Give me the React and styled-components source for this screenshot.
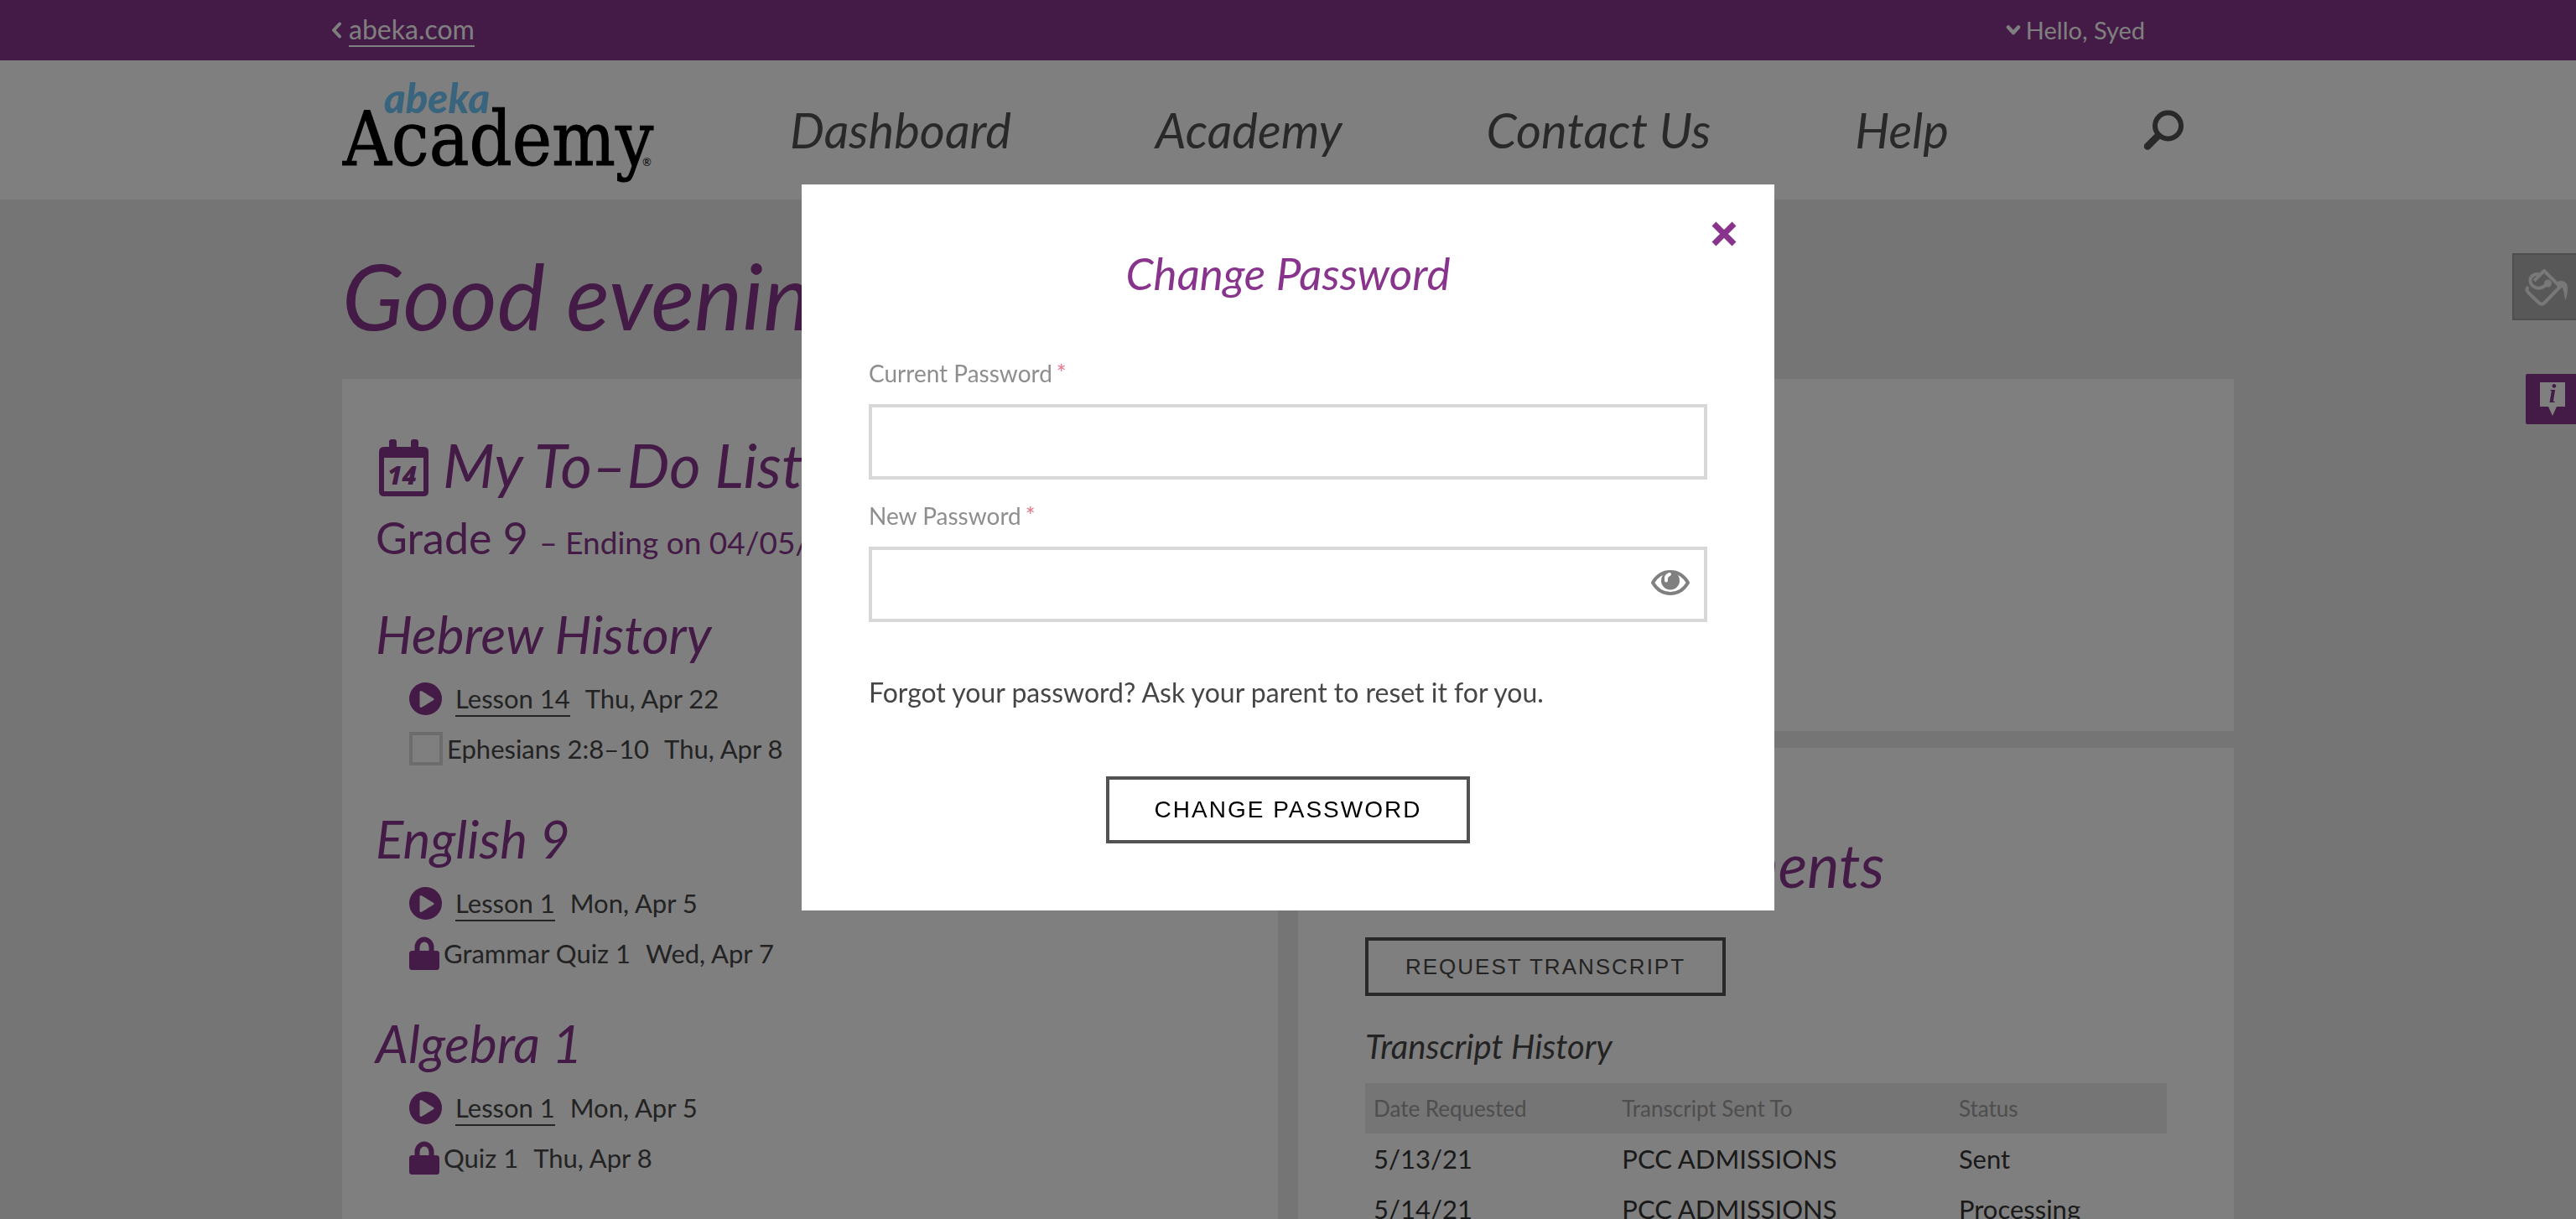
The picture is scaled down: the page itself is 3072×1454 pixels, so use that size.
import React from 'react';
import styled, { createGlobalStyle } from 'styled-components';

const purple = '#88348c';
const ink = '#464646';
const charcoal = '#525252';
const mist = '#eaeaea';
const sans = 'Lato, "Open Sans", sans-serif';
const grotesk = '"Liberation Sans", Arial, sans-serif';

const GlobalStyle = createGlobalStyle`
  *, *::before, *::after { box-sizing: border-box; }
  body { margin: 0; background: ${mist}; font-family: ${sans}; color: ${ink}; }
  h1, h2, h3, p, ul { margin: 0; padding: 0; font-weight: 400; }
  svg { display: block; flex: none; }
`;

const Page = styled.div`
  display: flex;
  flex-direction: column;
  height: 100vh;
  overflow: hidden;
  background: ${mist};
`;

/* ---------- top bar and header ---------- */

const TopBar = styled.div`
  flex: none;
  background: ${purple};
  color: #fff;
`;

const TopBarInner = styled.div`
  display: flex;
  align-items: center;
  justify-content: space-between;
  height: 72px;
  max-width: 2282px;
  margin: 0 auto;
  padding: 0 119px 0 0;
  font-size: 32px;
  line-height: 36px;
`;

const TopBarGroup = styled.div`
  display: flex;
  align-items: center;
  gap: ${(p) => p.$gap}px;
`;

const UserButton = styled.button`
  display: flex;
  align-items: center;
  gap: 6px;
  padding: 0;
  border: 0;
  background: none;
  color: inherit;
  font: 29px/36px ${sans};
`;

const TextLink = styled.a`
  padding-bottom: 1px;
  border-bottom: 2px solid currentColor;
  color: inherit;
  text-decoration: none;
`;

const Header = styled.header`
  flex: none;
  background: #fff;
`;

const HeaderInner = styled.div`
  display: flex;
  align-items: center;
  height: 166px;
  max-width: 2256px;
  margin: 0 auto;
`;

const LogoLink = styled.a`
  flex: none;
  width: 534px;
`;

const Nav = styled.nav`
  display: flex;
  flex: 1;
  justify-content: space-between;
`;

const NavLink = styled.a`
  color: ${charcoal};
  font-size: 58px;
  font-style: italic;
  line-height: 72px;
  text-decoration: none;
`;

const SearchButton = styled.button`
  flex: none;
  display: flex;
  justify-content: flex-end;
  width: 340px;
  padding: 0 60px 0 0;
  border: 0;
  background: none;
  color: ${charcoal};
`;

/* ---------- dashboard ---------- */

const Main = styled.main`
  width: 100%;
  max-width: 2256px;
  margin: 0 auto;
  padding-top: 54px;
`;

const Greeting = styled.h1`
  margin-bottom: 40px;
  color: ${purple};
  font-size: 108px;
  font-style: italic;
  line-height: 120px;
`;

const Columns = styled.div`
  display: grid;
  grid-template-columns: 1fr 1fr;
  gap: 24px;
`;

const RightColumn = styled.div`
  display: grid;
  grid-template-rows: 420px auto;
  gap: 20px;
`;

const Panel = styled.section`
  padding: ${(p) => p.$pad || '60px 40px'};
  background: #fff;
`;

const PanelTitle = styled.h2`
  display: flex;
  align-items: center;
  gap: 16px;
  color: ${purple};
  font-size: 72px;
  font-style: italic;
  line-height: 84px;
`;

const GradeLine = styled.p`
  margin: 13px 0 40px;
  color: ${purple};
  font-size: 52px;
  line-height: 64px;
  white-space: nowrap;
`;

const GradeNote = styled.span`
  font-size: 37px;
`;

const Subject = styled.section`
  margin-bottom: 40px;
`;

const SubjectTitle = styled.h3`
  margin-bottom: 10px;
  color: ${purple};
  font-size: 62px;
  font-style: italic;
  line-height: 74px;
`;

const TaskList = styled.ul`
  padding-left: 40px;
  list-style: none;
`;

const Task = styled.li`
  display: flex;
  align-items: center;
  gap: ${(p) => (p.$kind === 'lesson' ? 16 : 5)}px;
  height: 60px;
  font-size: 31px;
`;

const TaskDate = styled.span`
  margin-left: 18px;
`;

const TaskCheck = styled.input`
  appearance: none;
  width: 40px;
  height: 40px;
  margin: 0;
  border: 4px solid #d8d8d8;
  background: #fff;
`;

/* ---------- buttons and table ---------- */

const OutlineButton = styled.button`
  display: block;
  height: ${(p) => (p.$large ? 80 : 70)}px;
  padding: 0 ${(p) => (p.$large ? 54 : 44)}px;
  border: 4px solid ${charcoal};
  background: #fff;
  color: ${(p) => (p.$large ? '#000' : ink)};
  font-family: ${grotesk};
  font-size: ${(p) => (p.$large ? 28 : 26)}px;
  letter-spacing: 2px;
  text-transform: uppercase;
  white-space: nowrap;
`;

const ButtonRow = styled.div`
  display: flex;
  justify-content: ${(p) => p.$align || 'flex-start'};
  margin-top: ${(p) => p.$top}px;
`;

const TableTitle = styled.h3`
  margin: 36px 0 20px;
  font-size: 40px;
  font-style: italic;
  line-height: 48px;
`;

const Table = styled.table`
  width: 100%;
  border-collapse: collapse;
  table-layout: fixed;
  color: #343434;
  font-size: 31px;

  th, td { height: 60px; padding: 0 10px; text-align: left; }
  th { background: ${mist}; color: #9c9c9c; font-size: 26px; font-weight: 400; }
  th:nth-child(1) { width: 31%; }
  th:nth-child(2) { width: 42%; }
`;

/* ---------- side tabs ---------- */

const SideTabs = styled.aside`
  position: fixed;
  top: 302px;
  right: 0;
  display: flex;
  flex-direction: column;
  align-items: flex-end;
  gap: 64px;
`;

const ThemeTab = styled.button`
  width: 76px;
  height: 80px;
  padding: 0;
  border: 2px solid #9c9c9c;
  border-right: 0;
  background: #b0b0b0;
`;

const InfoTab = styled.button`
  width: 60px;
  height: 60px;
  padding: 0;
  border: 0;
  border-radius: 2px 0 0 2px;
  background: ${purple};
`;

/* ---------- modal ---------- */

const Overlay = styled.div`
  position: fixed;
  inset: 0;
  display: flex;
  align-items: flex-start;
  justify-content: center;
  padding-top: 220px;
  background: rgba(0, 0, 0, 0.5);
`;

const Dialog = styled.form`
  position: relative;
  width: 1160px;
  max-width: 100%;
  padding: 74px 80px 80px;
  background: #fff;
`;

const CloseButton = styled.button`
  position: absolute;
  top: 44px;
  right: 45px;
  padding: 0;
  border: 0;
  background: none;
  color: ${purple};
`;

const DialogTitle = styled.h2`
  margin-bottom: 70px;
  color: ${purple};
  font-size: 53px;
  font-style: italic;
  line-height: 64px;
  text-align: center;
`;

const Field = styled.div`
  margin-bottom: 26px;
`;

const Label = styled.label`
  display: block;
  margin-bottom: 20px;
  color: #8e8e8e;
  font-size: 28px;
  line-height: 34px;
`;

const Required = styled.span`
  margin-left: 5px;
  color: #e8788c;
`;

const InputWrap = styled.div`
  position: relative;
`;

const PasswordInput = styled.input`
  display: block;
  width: 100%;
  height: 90px;
  padding: 0 ${(p) => (p.$withToggle ? 88 : 20)}px 0 20px;
  border: 4px solid #d8d8d8;
  background: #fff;
  color: ${ink};
  font: 32px ${sans};
`;

const RevealButton = styled.button`
  position: absolute;
  top: 28px;
  right: 21px;
  padding: 0;
  border: 0;
  background: none;
  color: #808080;
`;

const Hint = styled.p`
  margin-top: 64px;
  font-size: 32px;
  line-height: 40px;
`;

/* ---------- drawings ---------- */

const Logo = () => (
  <svg width="400" height="130" viewBox="0 0 400 130" aria-label="Abeka Academy">
    <text x="1" y="107" fontFamily="'DejaVu Serif Condensed', 'DejaVu Serif', serif" fontStretch="semi-condensed" fontSize="89" fill="#000" stroke="#000" strokeWidth="1">Academy</text>
    <text x="50" y="45" fontFamily="Lato, sans-serif" fontWeight="900" fontStyle="italic" fontSize="49" fill="#70c8fc">abeka</text>
    <text x="358" y="108" fontFamily="Lato, sans-serif" fontSize="13" fill="#000">®</text>
  </svg>
);

const ChevronLeft = () => (
  <svg width="12" height="20" viewBox="0 0 12 20" fill="none" stroke="currentColor" strokeWidth="4" strokeLinecap="round" strokeLinejoin="round">
    <path d="M10 2.5 3 10l7 7.500" />
  </svg>
);

const ChevronDown = () => (
  <svg width="18" height="14" viewBox="0 0 18 14" fill="none" stroke="currentColor" strokeWidth="4.500" strokeLinecap="round" strokeLinejoin="round">
    <path d="M3 3.500 9 10l6-6.500" />
  </svg>
);

const SearchIcon = () => (
  <svg width="48" height="48" viewBox="0 0 48 48" fill="none" stroke="currentColor" strokeLinecap="round">
    <circle cx="29.500" cy="19" r="15.500" strokeWidth="6" />
    <path d="M17 31.500 5 43.500" strokeWidth="8.500" />
  </svg>
);

const CalendarIcon = () => (
  <svg width="64" height="84" viewBox="-4 0 64 84" fill="currentColor">
    <path fillRule="evenodd" d="M6 21h6v-6q0-3 3-3h3q3 0 3 3v6h17v-6q0-3 3-3h3q3 0 3 3v6h6q6 0 6 6v47q0 6-6 6H6q-6 0-6-6V27q0-6 6-6ZM6 34v40h47V34Z" />
    <text x="10" y="66" fontFamily="'Open Sans', sans-serif" fontWeight="800" fontStyle="italic" fontSize="30">14</text>
  </svg>
);

const PlayIcon = () => (
  <svg width="39" height="39" viewBox="0 0 39 39" aria-hidden="true">
    <circle cx="19.500" cy="19.500" r="19.500" fill={purple} />
    <path d="M14 11.500 28 20 14 28.500Z" fill="#fff" stroke="#fff" strokeWidth="3" strokeLinejoin="round" />
  </svg>
);

const LockIcon = () => (
  <svg width="36" height="40" viewBox="0 0 36 40" aria-hidden="true">
    <path d="M9.500 20v-7a8.500 9.500 0 0 1 17 0v7" fill="none" stroke={purple} strokeWidth="6" />
    <rect y="17" width="36" height="23" rx="3.500" fill={purple} />
  </svg>
);

const CloseIcon = () => (
  <svg width="30" height="30" viewBox="0 0 30 30" fill="none" stroke="currentColor" strokeWidth="7">
    <path d="M3 3l24 24M27 3 3 27" />
  </svg>
);

const EyeIcon = () => (
  <svg width="46" height="30" viewBox="0 0 46 30">
    <path d="M2 15C7 6.500 14 2 23 2s16 4.500 21 13c-5 8.500-12 13-21 13S7 23.500 2 15Z" fill="none" stroke="currentColor" strokeWidth="4" strokeLinejoin="round" />
    <circle cx="23" cy="12.500" r="11" fill="currentColor" />
    <path d="M18 12.500c-.6-3.600 1-6.500 4-7.500" fill="none" stroke="#fff" strokeWidth="4" strokeLinecap="round" />
  </svg>
);

const PaintIcon = () => (
  <svg width="74" height="76" viewBox="2 2 74 76" fill="none" stroke="#f0f0f0" strokeWidth="4" strokeLinejoin="round">
    <path d="M26 33 38 21 57 40 38.500 59q-3.500 3.500-7 0L19 47q-3-3.500 0-7" />
    <path d="M33 26c-5-2.500-11 .5-11.500 5.500C21 38 27 42.500 33 41.500c4-.7 7-3 9.500-5.500" />
    <circle cx="42.500" cy="36" r="4.500" fill="#f0f0f0" stroke="none" />
    <path d="M53 34.500c7-3.500 12.500 0 13 6.500.3 5.500-1 11-2.500 15-1.500-4-1.500-8-3-13-1-3-3-4-5-3.500Z" fill="#f0f0f0" stroke="none" />
  </svg>
);

const InfoIcon = () => (
  <svg width="60" height="60" viewBox="0 0 60 60">
    <path d="M17 10h30v29H37l-5 11-5-11H17Z" fill="#fff" />
    <text x="32" y="34" textAnchor="middle" fontFamily="'Liberation Serif', serif" fontWeight="700" fontStyle="italic" fontSize="31" fill={purple}>i</text>
  </svg>
);

/* ---------- data ---------- */

const navItems = ['Dashboard', 'Academy', 'Contact Us', 'Help'];

const subjects = [
  {
    name: 'Hebrew History',
    tasks: [
      { kind: 'lesson', title: 'Lesson 14', date: 'Thu, Apr 22' },
      { kind: 'reading', title: 'Ephesians 2:8–10', date: 'Thu, Apr 8' },
    ],
  },
  {
    name: 'English 9',
    tasks: [
      { kind: 'lesson', title: 'Lesson 1', date: 'Mon, Apr 5' },
      { kind: 'quiz', title: 'Grammar Quiz 1', date: 'Wed, Apr 7' },
    ],
  },
  {
    name: 'Algebra 1',
    tasks: [
      { kind: 'lesson', title: 'Lesson 1', date: 'Mon, Apr 5' },
      { kind: 'quiz', title: 'Quiz 1', date: 'Thu, Apr 8' },
    ],
  },
];

const transcripts = [
  { date: '5/13/21', to: 'PCC ADMISSIONS', status: 'Sent' },
  { date: '5/14/21', to: 'PCC ADMISSIONS', status: 'Processing' },
];

function TaskRow({ kind, title, date }) {
  return (
    <Task $kind={kind}>
      {kind === 'lesson' && <PlayIcon />}
      {kind === 'quiz' && <LockIcon />}
      {kind === 'reading' && <TaskCheck type="checkbox" id="reading-task" />}
      <span>
        {kind === 'lesson' && <TextLink href="#lesson">{title}</TextLink>}
        {kind === 'quiz' && title}
        {kind === 'reading' && <label htmlFor="reading-task">{title}</label>}
        <TaskDate>{date}</TaskDate>
      </span>
    </Task>
  );
}

function ChangePasswordDialog() {
  return (
    <Overlay>
      <Dialog role="dialog" aria-modal="true" aria-labelledby="dialog-title">
        <CloseButton type="button" aria-label="Close"><CloseIcon /></CloseButton>
        <DialogTitle id="dialog-title">Change Password</DialogTitle>
        <Field>
          <Label htmlFor="current-password">Current Password<Required>*</Required></Label>
          <PasswordInput id="current-password" type="password" />
        </Field>
        <Field>
          <Label htmlFor="new-password">New Password<Required>*</Required></Label>
          <InputWrap>
            <PasswordInput id="new-password" type="password" $withToggle />
            <RevealButton type="button" aria-label="Show password"><EyeIcon /></RevealButton>
          </InputWrap>
        </Field>
        <Hint>Forgot your password? Ask your parent to reset it for you.</Hint>
        <ButtonRow $align="center" $top={80}>
          <OutlineButton type="button" $large>Change Password</OutlineButton>
        </ButtonRow>
      </Dialog>
    </Overlay>
  );
}

export default function App() {
  return (
    <Page>
      <GlobalStyle />
      <TopBar>
        <TopBarInner>
          <TopBarGroup $gap={9}>
            <ChevronLeft />
            <TextLink href="#abeka">abeka.com</TextLink>
          </TopBarGroup>
          <UserButton type="button"><ChevronDown />Hello, Syed</UserButton>
        </TopBarInner>
      </TopBar>
      <Header>
        <HeaderInner>
          <LogoLink href="#home"><Logo /></LogoLink>
          <Nav>
            {navItems.map((item) => <NavLink key={item} href="#nav">{item}</NavLink>)}
          </Nav>
          <SearchButton type="button" aria-label="Search"><SearchIcon /></SearchButton>
        </HeaderInner>
      </Header>
      <Main>
        <Greeting>Good evening, Syed</Greeting>
        <Columns>
          <Panel>
            <PanelTitle><CalendarIcon />My To–Do List</PanelTitle>
            <GradeLine>Grade 9 <GradeNote>– Ending on 04/05/21</GradeNote></GradeLine>
            {subjects.map((subject) => (
              <Subject key={subject.name}>
                <SubjectTitle>{subject.name}</SubjectTitle>
                <TaskList>
                  {subject.tasks.map((task) => <TaskRow key={task.title} {...task} />)}
                </TaskList>
              </Subject>
            ))}
          </Panel>
          <RightColumn>
            <Panel />
            <Panel $pad="97px 80px">
              <PanelTitle><CalendarIcon />Grade Documents</PanelTitle>
              <ButtonRow $top={45}>
                <OutlineButton type="button">Request Transcript</OutlineButton>
              </ButtonRow>
              <TableTitle>Transcript History</TableTitle>
              <Table>
                <thead>
                  <tr><th>Date Requested</th><th>Transcript Sent To</th><th>Status</th></tr>
                </thead>
                <tbody>
                  {transcripts.map((row) => (
                    <tr key={row.date}><td>{row.date}</td><td>{row.to}</td><td>{row.status}</td></tr>
                  ))}
                </tbody>
              </Table>
            </Panel>
          </RightColumn>
        </Columns>
      </Main>
      <SideTabs>
        <ThemeTab type="button" aria-label="Change theme"><PaintIcon /></ThemeTab>
        <InfoTab type="button" aria-label="Information"><InfoIcon /></InfoTab>
      </SideTabs>
      <ChangePasswordDialog />
    </Page>
  );
}
